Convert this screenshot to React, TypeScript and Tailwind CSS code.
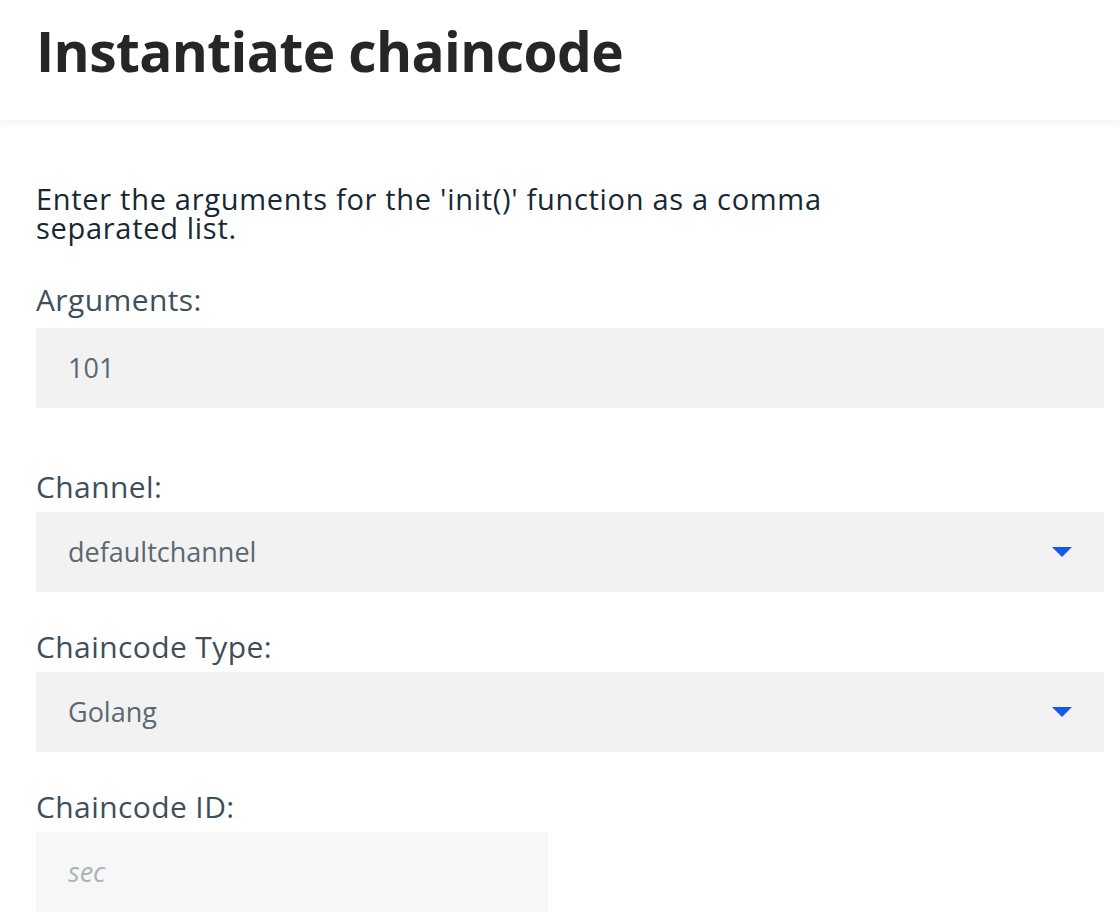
import React from "react";

const font = { fontFamily: '"Open Sans", "Noto Sans", sans-serif' };

function Caret() {
  return (
    <svg width="20" height="10" viewBox="0 0 20 10" aria-hidden="true">
      <polygon points="0,0 20,0 10,10" fill="#1a56e8" />
    </svg>
  );
}

function Field({
  label,
  children,
  className = "",
}: {
  label: string;
  children: React.ReactNode;
  className?: string;
}) {
  return (
    <div className={className}>
      <label className="block text-[30px] leading-[36px] tracking-[0.4px] text-[#3d4f5b]">{label}</label>
      {children}
    </div>
  );
}

function Select({ value }: { value: string }) {
  return (
    <div className="mt-[7px] flex h-20 items-center justify-between bg-[#f2f2f2] pl-8 pr-8 text-[27px] text-[#5a6872]">
      <span>{value}</span>
      <Caret />
    </div>
  );
}

export default function App() {
  return (
    <div className="min-h-[918px] bg-white" style={font}>
      <header className="h-[120px] bg-white px-9 pt-[23px] shadow-[0_3px_8px_rgba(20,40,80,0.06)]">
        <h1 className="text-[55px] font-bold leading-[55px] tracking-[-0.6px] text-[#262626]">
          Instantiate chaincode
        </h1>
      </header>

      <main className="pl-9 pr-4 pt-[64px]">
        <p className="max-w-[840px] text-[29px] leading-[29px] tracking-[0.7px] text-[#152935]">
          Enter the arguments for the 'init()' function as a comma separated list.
        </p>

        <Field label="Arguments:" className="mt-[40px]">
          <div className="mt-[10px] flex h-20 items-center bg-[#f2f2f2] px-8 text-[27px] text-[#5a6872]">
            101
          </div>
        </Field>

        <Field label="Channel:" className="mt-[61px]">
          <Select value="defaultchannel" />
        </Field>

        <Field label="Chaincode Type:" className="mt-[37px]">
          <Select value="Golang" />
        </Field>

        <Field label="Chaincode ID:" className="mt-[37px]">
          <div className="mt-[7px] flex h-20 w-[512px] items-center bg-[#f7f7f7] px-8 text-[27px] italic text-[#aab3b8]">
            sec
          </div>
        </Field>
      </main>
    </div>
  );
}
